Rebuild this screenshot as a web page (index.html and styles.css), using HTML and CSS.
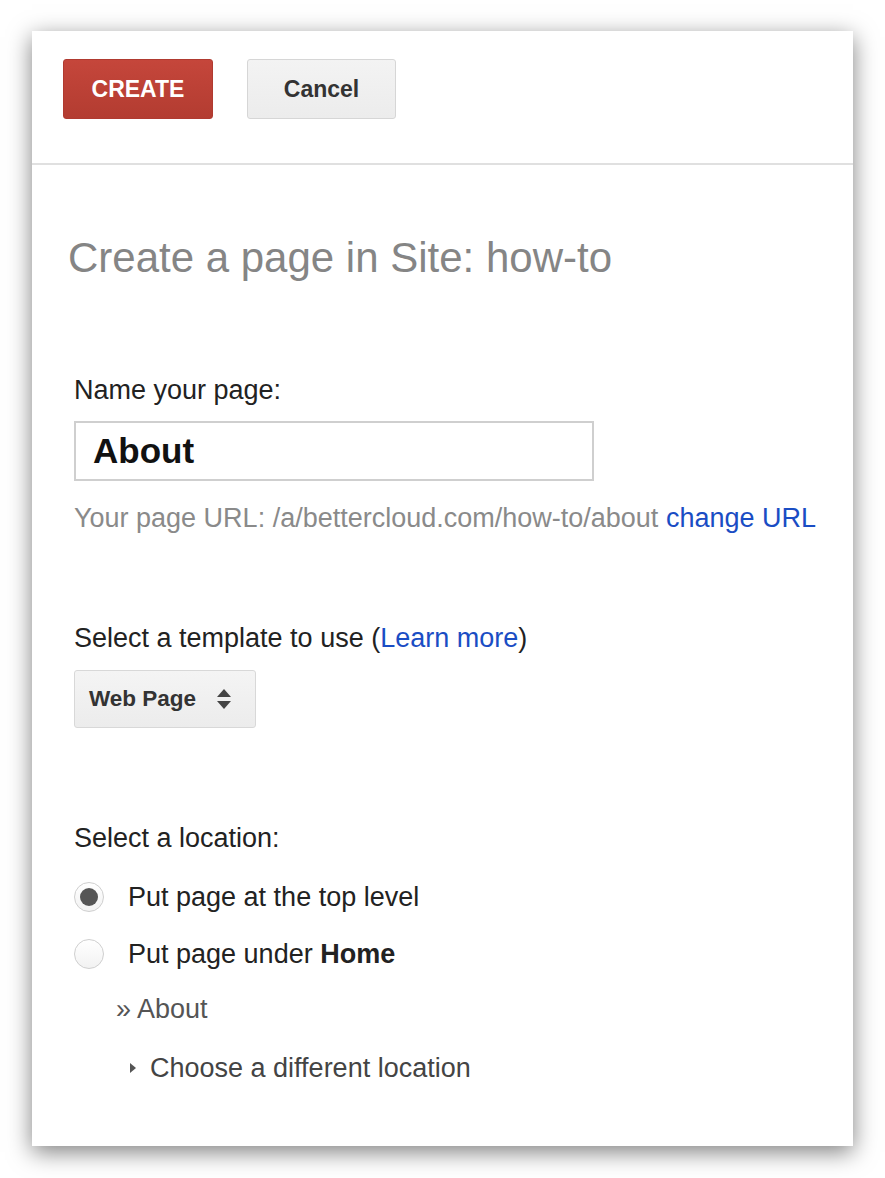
FILE: index.html
```html
<!DOCTYPE html>
<html>
<head>
<meta charset="utf-8">
<link rel="stylesheet" href="styles.css">
</head>
<body>
<div class="dialog">
  <div class="header">
    <button class="btn btn-create">CREATE</button>
    <button class="btn btn-cancel">Cancel</button>
  </div>
  <div class="content">
    <h1 class="title">Create a page in Site: how-to</h1>
    <div class="label label-name">Name your page:</div>
    <div class="input">About</div>
    <div class="url">Your page URL: /a/bettercloud.com/how-to/about <a class="link">change URL</a></div>
    <div class="label label-template">Select a template to use (<a class="link">Learn more</a>)</div>
    <div class="select">
      <span>Web Page</span>
      <svg class="updown" width="16" height="22" viewBox="0 0 16 22"><polygon points="8,1 15,9 1,9" fill="#444"/><polygon points="1,13 15,13 8,21" fill="#444"/></svg>
    </div>
    <div class="label label-location">Select a location:</div>
    <div class="radio-row row1">
      <span class="radio checked"><span class="dot"></span></span>
      <span>Put page at the top level</span>
    </div>
    <div class="radio-row row2">
      <span class="radio"></span>
      <span>Put page under <b>Home</b></span>
    </div>
    <div class="crumb">» About</div>
    <div class="choose">
      <svg class="tri" width="8" height="12" viewBox="0 0 8 12"><polygon points="1,1 7,6 1,11" fill="#555"/></svg>
      <span>Choose a different location</span>
    </div>
  </div>
</div>
</body>
</html>
```
FILE: styles.css
```css
* { box-sizing: border-box; }
html, body { margin: 0; padding: 0; background: #fff; }
body {
  font-family: "Liberation Sans", Arial, sans-serif;
  color: #222;
  padding-top: 31px;
  padding-left: 32px;
  height: 1178px;
  overflow: hidden;
}
.dialog {
  width: 821px;
  height: 1115px;
  background: #fff;
  box-shadow: 0 6px 22px rgba(0,0,0,0.5);
}
.header {
  height: 134px;
  padding: 28px 0 0 31px;
  border-bottom: 2px solid #e0e0e0;
  display: flex;
  gap: 34px;
}
.btn {
  height: 60px;
  border-radius: 3px;
  font-family: "Liberation Sans", Arial, sans-serif;
  font-weight: bold;
  font-size: 23px;
  padding: 0;
}
.btn-create {
  width: 150px;
  color: #fff;
  background: linear-gradient(#c5463b, #b33c31);
  border: 1px solid #b03a30;
}
.btn-cancel {
  width: 149px;
  color: #333;
  background: linear-gradient(#f3f3f3, #ececec);
  border: 1px solid #d6d6d6;
}
.content {
  padding-left: 42px;
  display: flex;
  flex-direction: column;
  align-items: flex-start;
  font-size: 27px;
  line-height: 30px;
}
.title {
  margin: 69px 0 0 -6px;
  font-size: 42px;
  line-height: 48px;
  font-weight: normal;
  color: #858585;
}
.label { color: #222; }
.label-name { margin-top: 93px; }
.input {
  margin-top: 16px;
  width: 520px;
  height: 60px;
  border: 2px solid #cfcfcf;
  padding-left: 17px;
  font-weight: bold;
  font-size: 35px;
  line-height: 56px;
  color: #111;
}
.url { margin-top: 22px; color: #8a8a8a; }
.link { color: #1a4dc4; }
.label-template { margin-top: 90px; }
.select {
  margin-top: 17px;
  width: 182px;
  height: 58px;
  border: 1px solid #d8d8d8;
  border-radius: 3px;
  background: linear-gradient(#f4f4f4, #ececec);
  display: flex;
  align-items: center;
  padding-left: 14px;
  font-weight: bold;
  font-size: 22.5px;
  color: #333;
}
.updown { margin-left: 20px; }
.label-location { margin-top: 95px; }
.radio-row {
  display: flex;
  align-items: center;
  gap: 24px;
  color: #222;
}
.row1 { margin-top: 29px; }
.row2 { margin-top: 27px; }
.radio {
  width: 30px;
  height: 30px;
  border-radius: 50%;
  border: 1px solid #cfcfcf;
  background: linear-gradient(#fff, #f2f2f2);
  display: flex;
  align-items: center;
  justify-content: center;
}
.dot {
  width: 18px;
  height: 18px;
  border-radius: 50%;
  background: #555;
}
.crumb { margin-top: 25px; margin-left: 42px; color: #555; }
.choose {
  margin-top: 29px;
  margin-left: 55px;
  display: flex;
  align-items: center;
  gap: 13px;
  color: #444;
}
```
